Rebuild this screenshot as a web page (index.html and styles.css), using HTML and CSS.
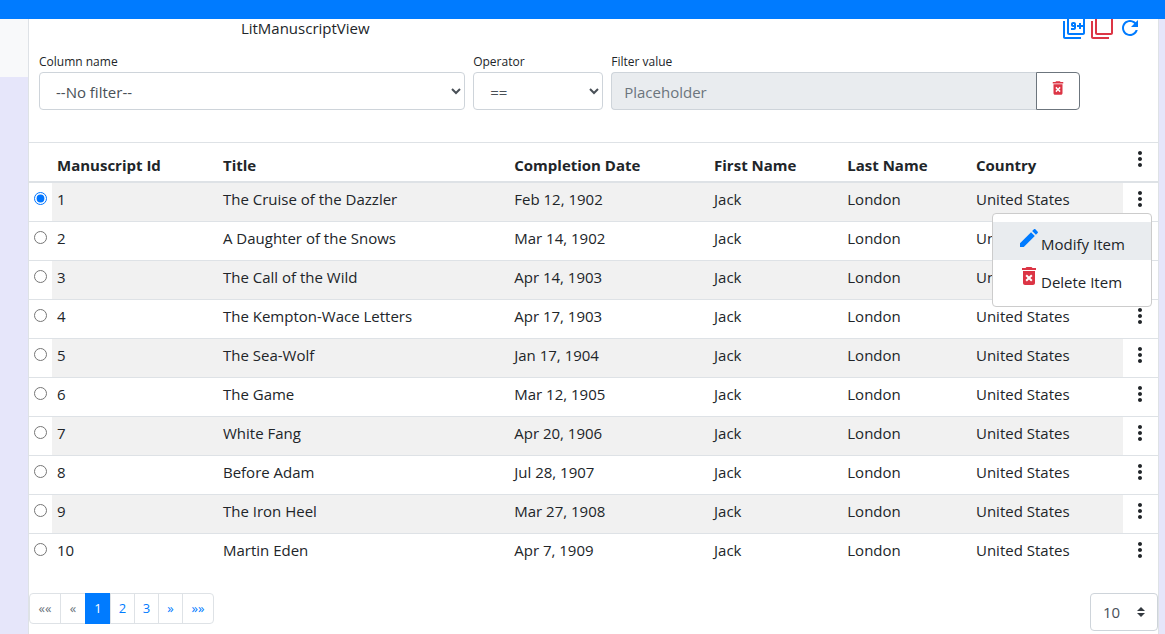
FILE: index.html
```
<!DOCTYPE html>
<html lang="en">
<head>
<meta charset="utf-8">
<title>LitManuscriptView</title>
<link rel="stylesheet" href="styles.css">
</head>
<body>
<svg class="sprite" aria-hidden="true">
  <symbol id="dots" viewBox="0 0 24 24"><path d="M12 8c1.100 0 2-.9 2-2s-.9-2-2-2-2 .9-2 2 .9 2 2 2zm0 2c-1.100 0-2 .9-2 2s.9 2 2 2 2-.9 2-2-.9-2-2-2zm0 6c-1.100 0-2 .9-2 2s.9 2 2 2 2-.9 2-2-.9-2-2-2z"/></symbol>
  <symbol id="trash" viewBox="0 0 24 24"><path d="M6 19c0 1.100.9 2 2 2h8c1.100 0 2-.9 2-2V7H6v12zm2.460-7.120l1.410-1.410L12 12.590l2.120-2.120 1.410 1.410L13.410 14l2.120 2.120-1.410 1.410L12 15.410l-2.120 2.120-1.410-1.410L10.590 14l-2.130-2.120zM15.500 4l-1-1h-5l-1 1H5v2h14V4z"/></symbol>
</svg>
<header class="topbar"></header>
<div class="page">
  <aside class="rail"></aside>
  <main class="card">
    <div class="toolbar">
      <div class="title">LitManuscriptView</div>
      <div class="tools">
        <button class="icon-btn blue" type="button" aria-label="Multi selection"><svg class="icon" viewBox="0 0 24 24"><path d="M3 5H1v16c0 1.100.9 2 2 2h16v-2H3V5zm11 7V8c0-1.110-.9-2-2-2h-1c-1.100 0-2 .89-2 2v1c0 1.110.9 2 2 2h1v1H9v2h3c1.100 0 2-.89 2-2zm-3-3V8h1v1h-1zm10-8H7c-1.100 0-2 .9-2 2v14c0 1.100.9 2 2 2h14c1.100 0 2-.9 2-2V3c0-1.100-.9-2-2-2zm0 8h-2V7h-2v2h-2v2h2v2h2v-2h2v6H7V3h14v6z"/></svg></button>
        <button class="icon-btn red" type="button" aria-label="Clear selection"><svg class="icon" viewBox="0 0 24 24"><path d="M3 5H1v16c0 1.100.9 2 2 2h16v-2H3V5zm18-4H7c-1.100 0-2 .9-2 2v14c0 1.100.9 2 2 2h14c1.100 0 2-.9 2-2V3c0-1.100-.9-2-2-2zm0 16H7V3h14v14z"/></svg></button>
        <button class="icon-btn blue" type="button" aria-label="Refresh"><svg class="icon" viewBox="0 0 24 24"><path d="M17.650 6.350C16.200 4.900 14.210 4 12 4c-4.420 0-7.990 3.580-7.990 8s3.570 8 7.990 8c3.730 0 6.840-2.550 7.730-6h-2.080c-.82 2.330-3.040 4-5.650 4-3.310 0-6-2.690-6-6s2.690-6 6-6c1.660 0 3.140.69 4.220 1.780L13 11h7V4l-2.350 2.350z"/></svg></button>
      </div>
    </div>

    <form class="filters">
      <div class="field">
        <label for="column">Column name</label>
        <select class="control" id="column"><option>--No filter--</option></select>
      </div>
      <div class="field">
        <label for="operator">Operator</label>
        <select class="control" id="operator"><option>==</option></select>
      </div>
      <div class="field">
        <label for="value">Filter value</label>
        <div class="group">
          <input class="control" id="value" type="text" placeholder="Placeholder" disabled>
          <button class="clear red" type="button" aria-label="Remove filter"><svg class="icon-small"><use href="#trash"/></svg></button>
        </div>
      </div>
    </form>

    <table class="grid">
      <colgroup><col class="c-pick"><col class="c-id"><col class="c-title"><col class="c-date"><col class="c-first"><col class="c-last"><col><col class="c-menu"></colgroup>
      <thead>
        <tr><th></th><th>Manuscript Id</th><th>Title</th><th>Completion Date</th><th>First Name</th><th>Last Name</th><th>Country</th><th class="actions"><button class="icon-btn" type="button" aria-label="Table menu"><svg class="icon"><use href="#dots"/></svg></button></th></tr>
      </thead>
      <tbody>
        <tr><td class="pick"><input type="radio" name="row" aria-label="Row 1" checked></td><td>1</td><td>The Cruise of the Dazzler</td><td>Feb 12, 1902</td><td>Jack</td><td>London</td><td>United States</td><td class="actions"><button class="icon-btn" type="button" aria-label="Menu for row 1"><svg class="icon"><use href="#dots"/></svg></button>
          <div class="menu">
            <button class="menu-item active" type="button"><svg class="icon blue" viewBox="0 0 24 24"><path d="M3 17.250V21h3.750L17.810 9.940l-3.750-3.750L3 17.250zM20.710 7.040c.39-.39.39-1.020 0-1.410l-2.340-2.340c-.39-.39-1.020-.39-1.410 0l-1.830 1.830 3.750 3.750 1.830-1.830z"/></svg><span>Modify Item</span></button>
            <button class="menu-item" type="button"><svg class="icon red"><use href="#trash"/></svg><span>Delete Item</span></button>
          </div></td></tr>
        <tr><td class="pick"><input type="radio" name="row" aria-label="Row 2"></td><td>2</td><td>A Daughter of the Snows</td><td>Mar 14, 1902</td><td>Jack</td><td>London</td><td>United States</td><td class="actions"><button class="icon-btn" type="button" aria-label="Menu for row 2"><svg class="icon"><use href="#dots"/></svg></button></td></tr>
        <tr><td class="pick"><input type="radio" name="row" aria-label="Row 3"></td><td>3</td><td>The Call of the Wild</td><td>Apr 14, 1903</td><td>Jack</td><td>London</td><td>United States</td><td class="actions"><button class="icon-btn" type="button" aria-label="Menu for row 3"><svg class="icon"><use href="#dots"/></svg></button></td></tr>
        <tr><td class="pick"><input type="radio" name="row" aria-label="Row 4"></td><td>4</td><td>The Kempton-Wace Letters</td><td>Apr 17, 1903</td><td>Jack</td><td>London</td><td>United States</td><td class="actions"><button class="icon-btn" type="button" aria-label="Menu for row 4"><svg class="icon"><use href="#dots"/></svg></button></td></tr>
        <tr><td class="pick"><input type="radio" name="row" aria-label="Row 5"></td><td>5</td><td>The Sea-Wolf</td><td>Jan 17, 1904</td><td>Jack</td><td>London</td><td>United States</td><td class="actions"><button class="icon-btn" type="button" aria-label="Menu for row 5"><svg class="icon"><use href="#dots"/></svg></button></td></tr>
        <tr><td class="pick"><input type="radio" name="row" aria-label="Row 6"></td><td>6</td><td>The Game</td><td>Mar 12, 1905</td><td>Jack</td><td>London</td><td>United States</td><td class="actions"><button class="icon-btn" type="button" aria-label="Menu for row 6"><svg class="icon"><use href="#dots"/></svg></button></td></tr>
        <tr><td class="pick"><input type="radio" name="row" aria-label="Row 7"></td><td>7</td><td>White Fang</td><td>Apr 20, 1906</td><td>Jack</td><td>London</td><td>United States</td><td class="actions"><button class="icon-btn" type="button" aria-label="Menu for row 7"><svg class="icon"><use href="#dots"/></svg></button></td></tr>
        <tr><td class="pick"><input type="radio" name="row" aria-label="Row 8"></td><td>8</td><td>Before Adam</td><td>Jul 28, 1907</td><td>Jack</td><td>London</td><td>United States</td><td class="actions"><button class="icon-btn" type="button" aria-label="Menu for row 8"><svg class="icon"><use href="#dots"/></svg></button></td></tr>
        <tr><td class="pick"><input type="radio" name="row" aria-label="Row 9"></td><td>9</td><td>The Iron Heel</td><td>Mar 27, 1908</td><td>Jack</td><td>London</td><td>United States</td><td class="actions"><button class="icon-btn" type="button" aria-label="Menu for row 9"><svg class="icon"><use href="#dots"/></svg></button></td></tr>
        <tr><td class="pick"><input type="radio" name="row" aria-label="Row 10"></td><td>10</td><td>Martin Eden</td><td>Apr 7, 1909</td><td>Jack</td><td>London</td><td>United States</td><td class="actions"><button class="icon-btn" type="button" aria-label="Menu for row 10"><svg class="icon"><use href="#dots"/></svg></button></td></tr>
      </tbody>
    </table>

    <div class="footer">
      <nav class="pager" aria-label="Pages">
        <a class="first off" href="#">««</a><a class="near off" href="#">«</a><a class="near current" href="#">1</a><a href="#">2</a><a href="#">3</a><a href="#">»</a><a class="last" href="#">»»</a>
      </nav>
      <select class="page-size" aria-label="Rows per page"><option>10</option></select>
    </div>
  </main>
</div>
</body>
</html>
```
FILE: styles.css
```
*, *::before, *::after { box-sizing: border-box; }

body {
  margin: 0;
  min-height: 100vh;
  display: flex;
  flex-direction: column;
  background: #e6e6fa;
  color: #212529;
  font: 15px/24px "Segoe UI", "Open Sans", sans-serif;
}

button, input, select { font: inherit; color: inherit; margin: 0; }

.sprite { display: none; }
.icon { display: block; width: 24px; height: 24px; fill: currentColor; }
.icon-small { display: block; width: 18px; height: 18px; fill: currentColor; }
.blue { color: #007bff; }
.red { color: #dc3545; }

.icon-btn {
  display: block;
  padding: 0;
  border: 0;
  background: none;
}
.icon-btn.blue { color: #007bff; }
.icon-btn.red { color: #dc3545; }

.topbar {
  position: sticky;
  top: 0;
  z-index: 2;
  height: 19px;
  background: #007bff;
}

.page { flex: 1; display: flex; padding-right: 6px; }
.rail { width: 28px; height: 58px; background: #f8f9fa; }
.card {
  flex: 1;
  min-width: 0;
  background: #fff;
  border: solid #dee2e6;
  border-width: 0 1px;
}

.toolbar {
  display: grid;
  grid-template-columns: 1fr 1fr;
  column-gap: 8px;
  margin-top: -3px;
  padding-right: 16px;
}
.title { text-align: center; }
.tools { display: flex; justify-content: flex-end; gap: 4px; }

.filters {
  display: grid;
  grid-template-columns: 10fr 130px 11fr;
  gap: 8px;
  padding: 12px 78px 32px 10px;
}
.field label { display: block; font-size: 12px; line-height: 20px; }
.control {
  display: block;
  width: 100%;
  height: 38px;
  padding: 7px 12px 5px;
  border: 1px solid #ced4da;
  border-radius: 4px;
  background-color: #fff;
  color: #495057;
}
.control:disabled { background-color: #e9ecef; }
.control::placeholder { color: #6c757d; }
.group { display: flex; }
.group .control { flex: 1; min-width: 0; border-radius: 4px 0 0 4px; border-right: 0; }
.clear {
  display: flex;
  justify-content: center;
  width: 44px;
  padding: 6px 0;
  border: 1px solid #6c757d;
  border-radius: 0 4px 4px 0;
  background: #fff;
}
.clear.red { color: #dc3545; }

.grid {
  width: 100%;
  table-layout: fixed;
  border-collapse: separate;
  border-spacing: 0;
}
.c-pick { width: 23px; }
.c-id { width: 14.7%; }
.c-title { width: 25.8%; }
.c-date { width: 17.7%; }
.c-first { width: 11.8%; }
.c-last { width: 11.4%; }
.c-menu { width: 35px; }
.grid th {
  height: 41px;
  padding: 10px 5px 4px;
  border-top: 1px solid #dee2e6;
  border-bottom: 2px solid #dee2e6;
  text-align: left;
  vertical-align: top;
}
.grid td {
  height: 39px;
  padding: 4px 5px;
  border-bottom: 1px solid #dee2e6;
  vertical-align: top;
}
.grid tbody tr:last-child td { border-bottom: 0; }
.grid tbody tr:nth-child(odd) td { background: #f1f1f1; }
.grid tbody tr td.pick, .grid tbody tr td.actions { background: #fff; }
.grid .pick { padding: 9px 0 0 5px; }
.pick input { display: block; width: 13px; height: 13px; }
.grid .actions { position: relative; padding: 4px 5px; }

.menu {
  position: absolute;
  z-index: 1;
  top: 30px;
  right: 6px;
  width: 160px;
  padding: 8px 0;
  border: 1px solid #ccc;
  border-radius: 4px;
  background: #fff;
}
.menu-item {
  display: flex;
  width: 100%;
  padding: 4px 24px;
  border: 0;
  background: none;
  text-align: left;
  white-space: nowrap;
}
.menu-item span { padding-top: 6px; }
.menu-item.active { background: #e9ecef; }

.footer {
  display: flex;
  justify-content: space-between;
  align-items: flex-start;
  padding: 20px 0 3px;
}
.pager {
  display: flex;
  border: 1px solid #dee2e6;
  border-radius: 4px;
  font-size: 13px;
  line-height: 29px;
}
.pager a {
  width: 24px;
  border-left: 1px solid #dee2e6;
  color: #007bff;
  text-align: center;
  text-decoration: none;
}
.pager .near { width: 25px; }
.pager .first { width: 30px; border-left: 0; }
.pager .last { width: 31px; }
.pager .off { color: #6c757d; }
.pager .current { margin: -1px 0; padding: 1px 0; border-color: #007bff; background: #007bff; color: #fff; }

.page-size {
  appearance: none;
  width: 68px;
  height: 38px;
  padding: 6px 12px;
  border: 1px solid #ced4da;
  border-radius: 4px;
  color: #495057;
  background: #fff url("data:image/svg+xml,%3Csvg xmlns='http://www.w3.org/2000/svg' viewBox='0 0 4 5'%3E%3Cpath fill='%23343a40' d='M2 0L0 2h4zm0 5L0 3h4z'/%3E%3C/svg%3E") no-repeat right 12px center / 8px 10px;
}
```
